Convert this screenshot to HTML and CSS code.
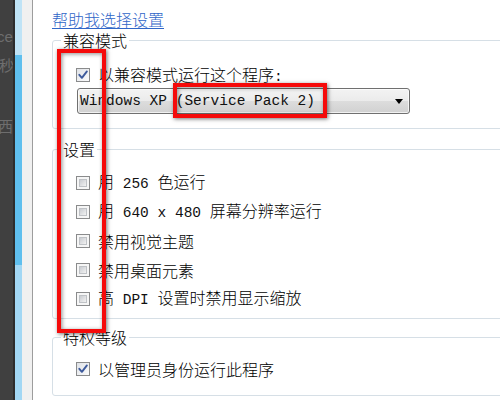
FILE: index.html
```html
<!DOCTYPE html>
<html lang="zh-CN">
<head>
<meta charset="utf-8">
<title>兼容性</title>
<link rel="stylesheet" href="styles.css">
</head>
<body>
<div class="screen">
  <div class="side">
    <div class="dark">
      <span class="ghost ghost-1">ce</span>
      <span class="ghost ghost-2">秒</span>
      <span class="ghost ghost-3">西</span>
    </div>
    <div class="edge"></div>
    <div class="scroll">
      <div class="scroll-top"></div>
      <div class="scroll-thumb"></div>
      <div class="scroll-rest"></div>
    </div>
    <div class="frame"></div>
    <div class="frame-line"></div>
  </div>

  <div class="main">
    <a class="help" href="#">帮助我选择设置</a>

    <div class="group group-compat">
      <div class="legend">兼容模式</div>
      <div class="row row-first">
        <span class="cb checked"><svg viewBox="0 0 14 14" width="14" height="14"><path d="M3.3 6.8 L5.9 9.8 L10.9 3.4" fill="none" stroke="#3d5a9c" stroke-width="1.9" stroke-linecap="round" stroke-linejoin="round"/></svg></span>
        <span class="label">以兼容模式运行这个程序<span class="m">:</span></span>
      </div>
      <div class="select">
        <span class="m">Windows XP (Service Pack 2)</span>
        <svg class="arrow" viewBox="0 0 8 5" width="8" height="5"><path d="M0 0 H8 L4 5 Z" fill="#000"/></svg>
      </div>
    </div>

    <div class="group group-settings">
      <div class="legend">设置</div>
      <div class="rows">
        <div class="row"><span class="cb"><i></i></span><span class="label">用<span class="m"> 256 </span>色运行</span></div>
        <div class="row"><span class="cb"><i></i></span><span class="label">用<span class="m"> 640 x 480 </span>屏幕分辨率运行</span></div>
        <div class="row"><span class="cb"><i></i></span><span class="label">禁用视觉主题</span></div>
        <div class="row"><span class="cb"><i></i></span><span class="label">禁用桌面元素</span></div>
        <div class="row"><span class="cb"><i></i></span><span class="label">高<span class="m"> DPI </span>设置时禁用显示缩放</span></div>
      </div>
    </div>

    <div class="group group-priv">
      <div class="legend">特权等级</div>
      <div class="rows">
        <div class="row"><span class="cb checked"><svg viewBox="0 0 14 14" width="14" height="14"><path d="M3.3 6.8 L5.9 9.8 L10.9 3.4" fill="none" stroke="#3d5a9c" stroke-width="1.9" stroke-linecap="round" stroke-linejoin="round"/></svg></span><span class="label">以管理员身份运行此程序</span></div>
      </div>
    </div>
  </div>

  <div class="mark mark-column"></div>
  <div class="mark mark-sp"></div>
</div>
</body>
</html>
```

FILE: styles.css
```css
* { box-sizing: border-box; }

html, body {
  margin: 0;
  padding: 0;
  background: #fff;
}

.screen {
  position: relative;
  width: 500px;
  height: 400px;
  overflow: hidden;
  display: flex;
  background: #fff;
  font-family: "Noto Sans CJK SC", "Noto Sans", sans-serif;
  font-size: 16px;
  color: #000;
}

/* left strip: window behind */
.side {
  display: flex;
  flex: 0 0 33px;
  height: 400px;
}
.dark {
  width: 13px;
  background: #404040;
  display: flex;
  flex-direction: column;
  overflow: hidden;
  white-space: nowrap;
}
.ghost {
  color: #6e6e6e;
  font-size: 15px;
  line-height: 15px;
  display: block;
}
.ghost-1 { margin-top: 29px; margin-left: -3px; font-family: "Liberation Sans", sans-serif; }
.ghost-2 { margin-top: 13px; margin-left: -1px; }
.ghost-3 { margin-top: 46px; margin-left: -2px; }
.edge {
  width: 2px;
  background: #2c2c2c;
}
.scroll {
  width: 7px;
  display: flex;
  flex-direction: column;
}
.scroll-top { height: 55px; background: #bfe3f6; }
.scroll-thumb { height: 210px; background: #5fbfee; }
.scroll-rest { flex: 1; background: #a2d7f4; }
.frame {
  width: 10px;
  background: #f0f0f0;
}
.frame-line {
  width: 1px;
  background: #9d9d9d;
}

/* main dialog content */
.main {
  flex: 1;
  display: flex;
  flex-direction: column;
  padding: 11px 0 0 19px;
  margin-right: -20px;
}

.help {
  align-self: flex-start;
  color: #2f66c8;
  line-height: 16px;
  text-decoration: underline;
  text-underline-offset: 2px;
  font-weight: 300;
}

.group {
  display: flex;
  flex-direction: column;
  border: 1px solid #d6dfe6;
  border-radius: 3px;
}
.legend {
  align-self: flex-start;
  margin: -9px 0 0 8px;
  padding: 0 2px;
  background: #fff;
  line-height: 16px;
  font-weight: 300;
}

.group-compat { margin-top: 13px; padding-bottom: 14px; }
.group-settings { margin-top: 20px; padding-bottom: 5px; }
.group-settings .rows { margin-top: 11px; }
.group-priv { margin-top: 18px; padding-bottom: 12px; }
.group-priv .rows { margin-top: 9px; }

.row {
  display: flex;
  align-items: center;
  height: 29px;
  padding-left: 23px;
  gap: 8px;
}
.row-first {
  height: 20px;
  margin-top: 17px;
}
.label {
  white-space: nowrap;
  line-height: 16px;
  font-weight: 300;
}
.m {
  font-family: "Liberation Mono", monospace;
  font-size: 14.5px;
  font-weight: 400;
  color: #111;
  white-space: pre;
}

/* checkbox */
.cb {
  flex: 0 0 14px;
  width: 14px;
  height: 14px;
  border: 1px solid #8a8b8c;
  background: #f6f6f6;
  display: flex;
  padding: 2px;
}
.cb i {
  flex: 1;
  border: 1px solid #bfc2c6;
  background: linear-gradient(135deg, #c9ccd1, #f2f2f2);
}
.cb.checked {
  padding: 0;
  background: linear-gradient(135deg, #dfe2e7, #fbfbfb);
}
.cb.checked svg {
  margin: -1px;
  display: block;
}

/* dropdown */
.select {
  margin: 3px 0 0 24px;
  width: 333px;
  height: 26px;
  border: 1px solid #707070;
  border-radius: 3px;
  background: linear-gradient(#f3f3f3, #ebebeb 50%, #dddddd 50%, #d1d1d1);
  box-shadow: inset 0 0 0 1px rgba(255,255,255,0.7);
  display: flex;
  align-items: center;
  justify-content: space-between;
  padding: 0 6px 0 2px;
}
.select .m {
  line-height: 16px;
}
.arrow { display: block; margin-top: 1px; }

/* red annotation boxes overlaid on the screenshot */
.mark {
  position: absolute;
  border: 4px solid #f50a0a;
  box-shadow: 1px 1px 4px rgba(0,0,0,0.55), inset 1px 1px 4px rgba(0,0,0,0.45);
}
.mark-column {
  left: 57px;
  top: 49px;
  width: 49px;
  height: 284px;
}
.mark-sp {
  left: 173px;
  top: 83px;
  width: 154px;
  height: 35px;
}
```
